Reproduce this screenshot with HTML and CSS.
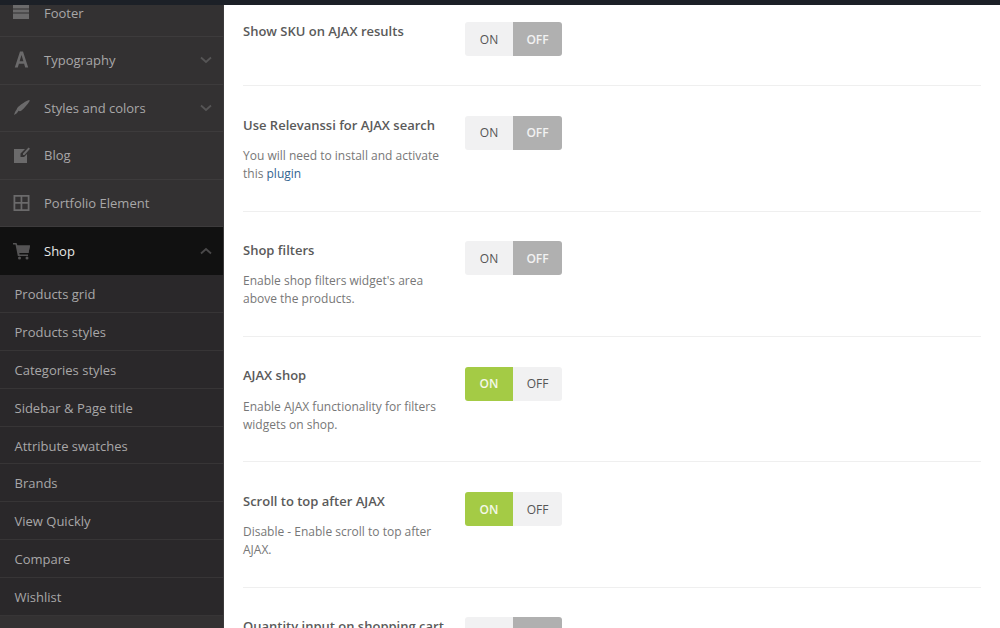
FILE: index.html
```html
<!DOCTYPE html>
<html lang="en">
<head>
<meta charset="utf-8">
<title>Theme settings</title>
<link rel="stylesheet" href="styles.css">
</head>
<body>
<div class="topbar"></div>
<div class="layout">
  <nav class="sidebar">
    <a class="nav-row nav-row--clipped">
      <svg class="nav-icon" viewBox="0 0 20 20"><path d="M1 0h16v3.500H1zM1 4.500h16v3H1zM1 8.500h16V14H1z" fill="#6b6a6b"/></svg>
      <span>Footer</span>
    </a>
    <a class="nav-row">
      <svg class="nav-icon" viewBox="0 0 20 20"><path d="M2.800 17.500 8 1.500h3l5.200 16h-3l-1.100-3.800H6.900l-1.100 3.800zM7.600 11.200h3.800L9.500 5z" fill="#6b6a6b"/></svg>
      <span>Typography</span>
      <svg class="chevron" viewBox="0 0 12 8"><path d="M1 1.500 6 6l5-4.500" fill="none" stroke="#565556" stroke-width="1.800"/></svg>
    </a>
    <a class="nav-row">
      <svg class="nav-icon" viewBox="0 0 20 20"><path d="M17 2c.6 0 .8.600.5 1.300C15.500 6.500 12.500 10 9.500 12.500c-1 .8-2.200.8-3 .2C5.400 14.700 3.800 16.300 2 17c.6-1.700 1.100-3.800 2.500-5.300C5.300 9.500 7 8.200 9 6.600 11.500 4.700 14.800 2.500 17 2z" fill="#6b6a6b"/></svg>
      <span>Styles and colors</span>
      <svg class="chevron" viewBox="0 0 12 8"><path d="M1 1.500 6 6l5-4.500" fill="none" stroke="#565556" stroke-width="1.800"/></svg>
    </a>
    <a class="nav-row">
      <svg class="nav-icon" viewBox="0 0 20 20"><path d="M2 4h11L8.500 8.500V12h3.500L15 9v9H2zM11 8.500l5.500-6 1.500 1.200-5.500 6.300H11z" fill="#6b6a6b"/></svg>
      <span>Blog</span>
    </a>
    <a class="nav-row">
      <svg class="nav-icon" viewBox="0 0 20 20"><path d="M1.500 2h16v16h-16zM3.300 3.800v5.300h5.300V3.800zm7 0v5.300h5.400V3.800zm-7 7v5.400h5.300v-5.400zm7 0v5.400h5.400v-5.400z" fill="#6b6a6b" fill-rule="evenodd"/></svg>
      <span>Portfolio Element</span>
    </a>
    <a class="nav-row nav-row--active">
      <svg class="nav-icon" viewBox="0 0 20 20"><path d="M1 2h3.500l1 2.500H18l-1.500 7.500H7.300l.3 1.500H16V15H5.800L3.500 3.500H1z" fill="#555455"/><path d="M5 4.500h13l-1.500 7.500H7z" fill="#555455"/><circle cx="7.500" cy="17" r="1.500" fill="#555455"/><circle cx="15" cy="17" r="1.500" fill="#555455"/></svg>
      <span>Shop</span>
      <svg class="chevron" viewBox="0 0 12 8"><path d="M1 6.500 6 2l5 4.500" fill="none" stroke="#4a494a" stroke-width="1.800"/></svg>
    </a>
    <ul class="subnav">
      <li>Products grid</li>
      <li>Products styles</li>
      <li>Categories styles</li>
      <li>Sidebar &amp; Page title</li>
      <li>Attribute swatches</li>
      <li>Brands</li>
      <li>View Quickly</li>
      <li>Compare</li>
      <li>Wishlist</li>
    </ul>
  </nav>
  <main class="content">
    <section class="setting setting--first">
      <div class="setting-text"><h3>Show SKU on AJAX results</h3></div>
      <div class="toggle"><span class="on">ON</span><span class="off active-off">OFF</span></div>
    </section>
    <section class="setting">
      <div class="setting-text"><h3>Use Relevanssi for AJAX search</h3><p>You will need to install and activate this <a href="#">plugin</a></p></div>
      <div class="toggle"><span class="on">ON</span><span class="off active-off">OFF</span></div>
    </section>
    <section class="setting">
      <div class="setting-text"><h3>Shop filters</h3><p>Enable shop filters widget's area above the products.</p></div>
      <div class="toggle"><span class="on">ON</span><span class="off active-off">OFF</span></div>
    </section>
    <section class="setting">
      <div class="setting-text"><h3>AJAX shop</h3><p>Enable AJAX functionality for filters widgets on shop.</p></div>
      <div class="toggle"><span class="on active-on">ON</span><span class="off">OFF</span></div>
    </section>
    <section class="setting">
      <div class="setting-text"><h3>Scroll to top after AJAX</h3><p>Disable - Enable scroll to top after AJAX.</p></div>
      <div class="toggle"><span class="on active-on">ON</span><span class="off">OFF</span></div>
    </section>
    <section class="setting">
      <div class="setting-text"><h3>Quantity input on shopping cart</h3></div>
      <div class="toggle"><span class="on">ON</span><span class="off active-off">OFF</span></div>
    </section>
  </main>
</div>
</body>
</html>
```
FILE: styles.css
```css
* { box-sizing: border-box; }
html, body { margin: 0; height: 628px; overflow: hidden; }
body { font-family: "Open Sans", "Liberation Sans", sans-serif; background: #fff; }
.topbar { height: 5px; background: #1c2027; }
.layout { display: flex; height: 623px; overflow: hidden; }
.sidebar { width: 224px; flex: none; background: #333132; border-right: 1px solid #3c3a3b; overflow: hidden; }
.nav-row { display: flex; align-items: center; height: 47.6px; padding: 0 11px 0 12px; color: #a8a7a8; font-size: 13px; border-bottom: 1px solid #3d3b3c; }
.nav-row span { margin-left: 12px; flex: 1; }
.nav-row--clipped { height: 32px; align-items: flex-start; overflow: hidden; }
.nav-row--clipped span { line-height: 16px; }
.nav-row--active { background: #111111; color: #e8e8e8; border-bottom: 0; }
.nav-icon { width: 20px; height: 20px; flex: none; }
.chevron { width: 12px; height: 8px; flex: none; }
.subnav { list-style: none; margin: 0; padding: 0; background: #2a282a; }
.subnav li { height: 37.900px; line-height: 38px; padding-left: 14.500px; font-size: 13px; color: #a8a7a8; border-bottom: 1px solid #373536; }
.content { flex: 1; padding: 0 19px; min-width: 0; }
.setting { display: flex; height: 125.400px; padding-top: 29.600px; border-bottom: 1px solid #efefef; }
.setting--first { height: 81.300px; padding-top: 17.300px; }
.setting-text { width: 222px; flex: none; padding-right: 15px; margin-top: -.4px; }
.setting h3 { margin: 0 0 13.500px; font-size: 13px; line-height: 18px; font-weight: 600; color: #5a5a5a; }
.setting p { margin: 0; padding-right: 5px; font-size: 12px; line-height: 18px; color: #777; }
.setting a { color: #33658f; text-decoration: none; }
.toggle { display: flex; width: 97px; height: 34px; border-radius: 3px; overflow: hidden; font-size: 12px; }
.toggle span { display: flex; align-items: center; justify-content: center; background: #f1f1f2; color: #555; }
.toggle .on { width: 48px; }
.toggle .off { flex: 1; }
.toggle .active-off { background: #b0b0b0; color: #f2f2f2; font-weight: 600; }
.toggle .active-on { background: #a4cb45; color: #f4f8e8; font-weight: 600; }
```
